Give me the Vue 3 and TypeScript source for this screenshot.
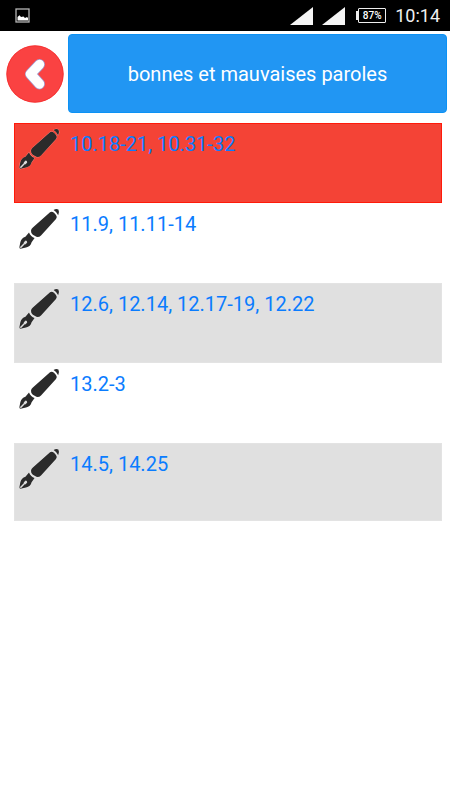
<script setup lang="ts">
import { ref } from 'vue'

interface Passage {
  id: number
  label: string
}

const title = 'bonnes et mauvaises paroles'
const passages: Passage[] = [
  { id: 1, label: '10.18-21, 10.31-32' },
  { id: 2, label: '11.9, 11.11-14' },
  { id: 3, label: '12.6, 12.14, 12.17-19, 12.22' },
  { id: 4, label: '13.2-3' },
  { id: 5, label: '14.5, 14.25' },
]
const selected = ref<number>(1)
</script>

<template>
  <div class="screen">
    <div class="status">
      <svg class="picture" width="16" height="16" viewBox="0 0 16 16" aria-hidden="true">
        <rect x="1" y="1" width="13" height="13" fill="none" stroke="#b5b5b5" stroke-width="1.3" />
        <path d="M2.5 12.5V9l2-1.8L6 9l2.5-.5L10 10l2-1 1 1v2.5z" fill="#fff" />
      </svg>
      <div class="indicators">
        <svg v-for="n in 2" :key="n" class="signal" width="23" height="18" viewBox="0 0 23 18" aria-hidden="true">
          <path d="M0 18 23 0v18z" fill="#f5f5f5" />
        </svg>
        <div class="battery">87%</div>
        <time class="clock">10:14</time>
      </div>
    </div>

    <header class="header">
      <button class="back" type="button" aria-label="Retour">
        <svg width="58" height="58" viewBox="0 0 58 58" aria-hidden="true">
          <circle cx="29" cy="29" r="28.5" fill="#fa4242" />
          <circle cx="29" cy="29" r="28.2" fill="none" stroke="#f52c2c" stroke-width="0.8" />
          <path d="M33.5 19.5 24.5 29 33.5 39" fill="none" stroke="#a09cd0" stroke-width="11" stroke-linecap="round" stroke-linejoin="round" />
          <path d="M33.5 19.5 24.5 29 33.5 39" fill="none" stroke="#fff" stroke-width="9.4" stroke-linecap="round" stroke-linejoin="round" />
        </svg>
      </button>
      <h1 class="title">{{ title }}</h1>
    </header>

    <main class="list">
      <button
        v-for="item in passages"
        :key="item.id"
        type="button"
        class="row"
        :class="{ selected: item.id === selected }"
        @click="selected = item.id"
      >
        <svg class="pen" width="42" height="42" viewBox="0 0 42 42" aria-hidden="true">
          <g fill="#2b2b2b" stroke="#fff" stroke-opacity="0.35" stroke-width="1" paint-order="stroke">
            <path d="M35.6 2Q38.2 .4 40.4 1.6 41.8 4.4 40.2 7.2 38.6 3.8 35.6 2Z" />
            <path d="M32 4.2Q34 3 36 4.8L38 7Q39.6 9 38 11L23 27.4Q21 29.4 18.4 28.8L14.8 26.8Q12.8 25.2 13 22.8 13.2 21 14.6 19.8Z" />
            <path d="M11 24.4Q12.8 28.6 16.6 30L13.6 34.2Q12.6 38.4 8 39.4L2.6 40.8Q1.2 40.8 1.4 39L2.4 34Q3.4 30 7.4 28.8Z" />
          </g>
          <path d="M2.4 39.8 7.2 34.8" stroke="#ddd" stroke-width="1.5" />
          <path d="M5.6 34.4 7.6 32.6Q9.2 32.6 9.2 34.4L7.4 36.4Z" fill="#ddd" />
        </svg>
        <span class="label">{{ item.label }}</span>
      </button>
    </main>
  </div>
</template>

<style>
body {
  margin: 0;
  background: #fff;
}
</style>

<style scoped>
.screen {
  min-height: 100vh;
  background: #fff;
  font-family: Roboto, "Liberation Sans", sans-serif;
}
.status {
  display: flex;
  align-items: center;
  justify-content: space-between;
  height: 31px;
  padding: 0 10px 0 15px;
  background: #000;
}
.indicators {
  display: flex;
  align-items: center;
  gap: 9px;
}
.battery {
  position: relative;
  box-sizing: border-box;
  width: 28px;
  height: 15px;
  margin-left: 4px;
  border: 1px solid #eee;
  border-radius: 1px;
  color: #fff;
  font-size: 10px;
  font-weight: 500;
  line-height: 13px;
  text-align: center;
}
.battery::before {
  content: "";
  position: absolute;
  left: -3px;
  top: 2px;
  width: 2px;
  height: 9px;
  background: #eee;
}
.clock {
  color: #f0f0f0;
  font-size: 18px;
  line-height: 31px;
}
.header {
  display: flex;
  align-items: center;
  gap: 4px;
  padding: 3px 3px 0 6px;
}
.back {
  flex: none;
  width: 58px;
  height: 58px;
  padding: 0;
  border: 0;
  border-radius: 50%;
  background: none;
  cursor: pointer;
}
.back svg {
  display: block;
}
.title {
  flex: 1;
  box-sizing: border-box;
  margin: 0;
  padding: 27px 8px 26px;
  border: 1px solid #0c92f5;
  border-radius: 4px;
  background: #2196f3;
  color: #fff;
  font-size: 20px;
  font-weight: 400;
  line-height: 24px;
  text-align: center;
}
.list {
  display: flex;
  flex-direction: column;
  padding: 10px 8px 0 14px;
}
.row {
  display: flex;
  align-items: flex-start;
  gap: 10px;
  box-sizing: border-box;
  min-height: 80px;
  padding: 4px 3px;
  border: 1px solid transparent;
  background: #fff;
  color: #0a7cff;
  font: inherit;
  font-size: 20px;
  line-height: 24px;
  text-align: left;
  cursor: pointer;
}
.row:nth-child(odd) {
  border-color: #e3e3e3;
  background: #e0e0e0;
}
.row.selected {
  border-color: #ff1a0a;
  background: #f44336;
}
.row:last-child {
  min-height: 78px;
}
.pen {
  flex: none;
}
.label {
  padding-top: 4px;
}
</style>
